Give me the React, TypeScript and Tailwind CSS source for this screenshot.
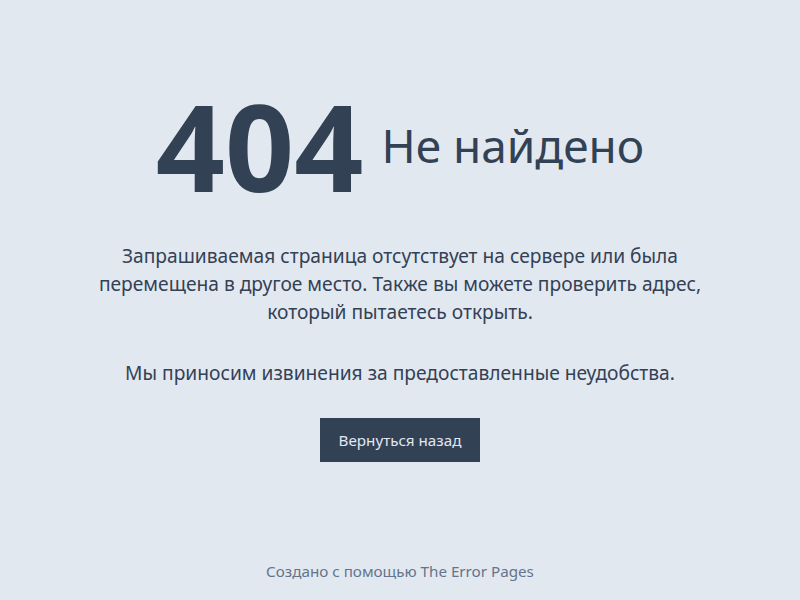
export default function App() {
  return (
    <div
      className="flex min-h-screen flex-col bg-[#e2e8f0] text-[#334155]"
      style={{ fontFamily: '"Noto Sans", sans-serif' }}
    >
      <main className="flex flex-1 flex-col items-center pt-[75px]">
        <div className="flex items-center gap-[18px]">
          <h1 className="text-[121px] font-bold leading-[140px]">404</h1>
          <h2 className="text-[46px] leading-[56px]">Не найдено</h2>
        </div>
        <div className="mt-[27px] max-w-[620px] text-center text-[19.2px] leading-7">
          <p>
            Запрашиваемая страница отсутствует на сервере или была перемещена в другое место. Также вы
            можете проверить адрес, который пытаетесь открыть.
          </p>
          <p className="mt-[33px]">Мы приносим извинения за предоставленные неудобства.</p>
        </div>
        <button className="mt-[31px] h-11 w-40 bg-[#334155] text-[15.2px] text-[#e2e8f0]">
          Вернуться назад
        </button>
      </main>
      <footer className="pb-[17px] text-center text-[15.2px] text-[#64748b]">
        Создано с помощью The Error Pages
      </footer>
    </div>
  );
}
